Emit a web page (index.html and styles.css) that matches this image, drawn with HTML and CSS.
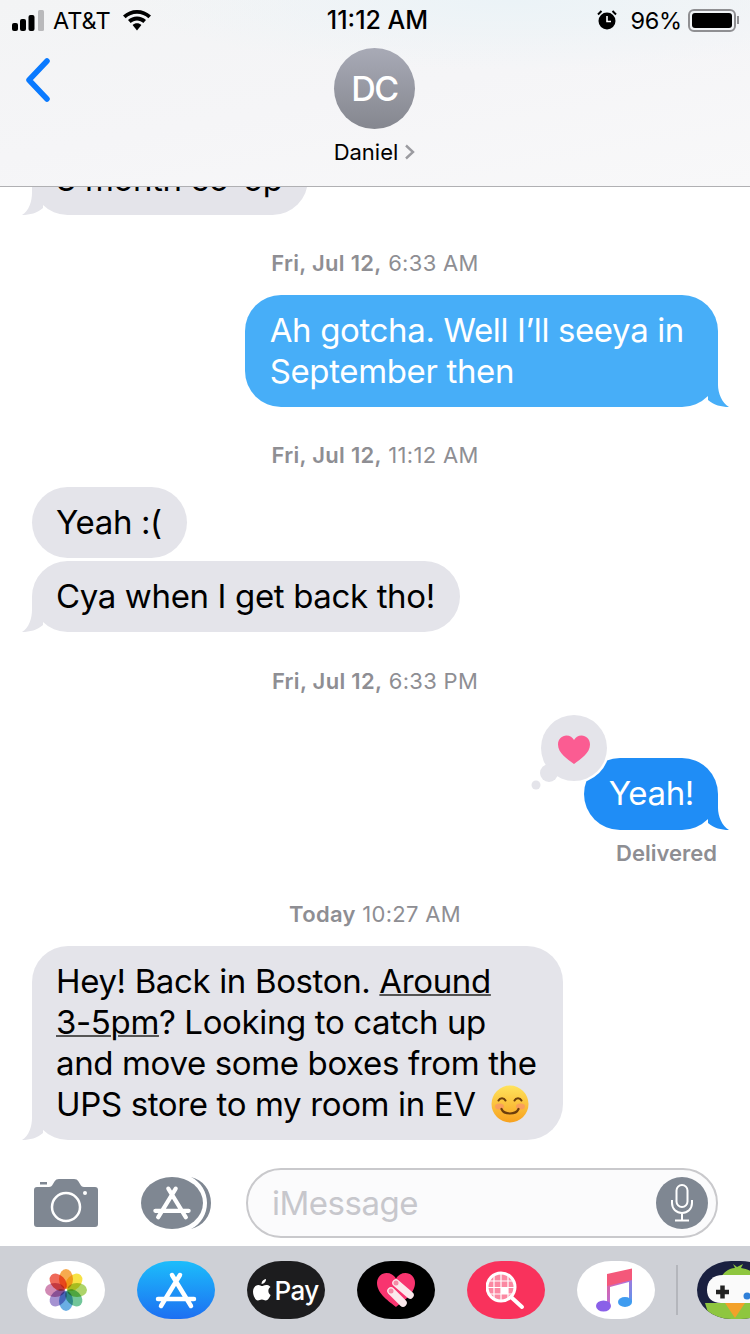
FILE: index.html
```html
<!DOCTYPE html>
<html lang="en">
<head>
    <meta charset="UTF-8">
    <meta name="viewport" content="width=device-width, initial-scale=1.0">
    <title>Messages</title>
    <link rel="stylesheet" href="styles.css">
</head>
<body>
    <div class="phone">
        <header class="header">
            <div class="status">
                <div class="status-left">
                    <svg class="signal" width="32" height="21" viewBox="0 0 32 21">
                        <rect x="0" y="13" width="6" height="8" rx="2" fill="#000"/>
                        <rect x="8" y="9" width="6" height="12" rx="2" fill="#000"/>
                        <rect x="16.500" y="5" width="6" height="16" rx="2" fill="#000"/>
                        <rect x="26" y="0" width="6" height="21" rx="1.500" fill="#b9b9bb"/>
                    </svg>
                    <span>AT&amp;T</span>
                    <svg class="wifi" width="28" height="21" viewBox="0 0 28 21">
                        <path d="M14 0C8.600 0 4 2 0 5.500L2.600 8.300C5.700 5.500 9.600 3.800 14 3.800S22.300 5.500 25.400 8.300L28 5.500C24 2 19.400 0 14 0Z" fill="#000"/>
                        <path d="M14 6.600C10.500 6.600 7.500 7.900 5 10.100L7.700 12.900C9.400 11.400 11.600 10.400 14 10.400S18.600 11.400 20.300 12.900L23 10.100C20.500 7.900 17.500 6.600 14 6.600Z" fill="#000"/>
                        <path d="M14 13.200C12.300 13.200 10.800 13.900 9.600 14.900L14 20.500L18.400 14.900C17.200 13.900 15.700 13.200 14 13.200Z" fill="#000"/>
                    </svg>
                </div>
                <div class="status-time">11:12 AM</div>
                <div class="status-right">
                    <svg class="alarm" width="20" height="20" viewBox="0 0 20 20">
                        <circle cx="10" cy="11" r="8.500" fill="#000"/>
                        <path d="M10 6V11.500H14" stroke="#fff" stroke-width="1.600" fill="none"/>
                        <path d="M1 4.500L4.500 1M19 4.500L15.500 1" stroke="#000" stroke-width="2"/>
                    </svg>
                    <span>96%</span>
                    <div class="battery"><div class="battery-fill"></div></div>
                    <div class="battery-nub"></div>
                </div>
            </div>
            <div class="nav">
                <svg class="back" width="26" height="44" viewBox="0 0 26 44">
                    <path d="M22 3L4 22L22 41" stroke="#0a7aff" stroke-width="5.500" stroke-linecap="round" stroke-linejoin="round" fill="none"/>
                </svg>
                <div class="contact">
                    <div class="avatar">DC</div>
                    <div class="contact-name">
                        Daniel
                        <svg width="11" height="16" viewBox="0 0 11 16">
                            <path d="M2 1.500L9 8L2 14.500" stroke="#9b9ba0" stroke-width="2.400" fill="none"/>
                        </svg>
                    </div>
                </div>
            </div>
        </header>

        <main class="thread">
            <div class="bubble in clipped">
                3 month co-op
                <svg class="tail"><use href="#tail-in"/></svg>
            </div>

            <div class="stamp"><b>Fri, Jul 12,</b> 6:33 AM</div>
            <div class="bubble out light">
                Ah gotcha. Well I’ll seeya in<br>September then
                <svg class="tail"><use href="#tail-out"/></svg>
            </div>

            <div class="stamp"><b>Fri, Jul 12,</b> 11:12 AM</div>
            <div class="bubble in">Yeah :(</div>
            <div class="bubble in next">
                Cya when I get back tho!
                <svg class="tail"><use href="#tail-in"/></svg>
            </div>

            <div class="stamp late"><b>Fri, Jul 12,</b> 6:33 PM</div>
            <div class="bubble out dark tapback-row">
                <div class="tapback">
                    <svg width="80" height="80" viewBox="0 0 80 80">
                        <circle cx="43" cy="33" r="35.500" fill="#fff"/>
                        <circle cx="43" cy="33" r="33" fill="#e4e4ea"/>
                        <circle cx="18" cy="58" r="9" fill="#e4e4ea"/>
                        <circle cx="5" cy="70" r="4.500" fill="#e4e4ea"/>
                        <path d="M43 49C36 44 27 38 27 29.500C27 24 31 20.500 35.500 20.500C39 20.500 41.500 22.500 43 25C44.500 22.500 47 20.500 50.500 20.500C55 20.500 59 24 59 29.500C59 38 50 44 43 49Z" fill="#fb5c92"/>
                    </svg>
                </div>
                Yeah!
                <svg class="tail"><use href="#tail-out"/></svg>
            </div>
            <div class="delivered">Delivered</div>

            <div class="stamp today"><b>Today</b> 10:27 AM</div>
            <div class="bubble in long">
                Hey! Back in Boston. <u>Around</u><br><u>3-5pm</u>? Looking to catch up<br>and move some boxes from the<br>UPS store to my room in EV
                <svg class="emoji" width="38" height="38" viewBox="0 0 38 38">
                    <defs>
                        <linearGradient id="emoji-face" x1="0" y1="0" x2="0" y2="1">
                            <stop offset="0" stop-color="#ffe35c"/>
                            <stop offset="1" stop-color="#f7a11e"/>
                        </linearGradient>
                    </defs>
                    <circle cx="19" cy="19" r="18.500" fill="url(#emoji-face)"/>
                    <ellipse cx="8.500" cy="21.500" rx="4.500" ry="3" fill="#f8926a" opacity=".7"/>
                    <ellipse cx="29.500" cy="21.500" rx="4.500" ry="3" fill="#f8926a" opacity=".7"/>
                    <path d="M7.500 15.500C9 12.500 13 12.500 14.500 15.500M23.500 15.500C25 12.500 29 12.500 30.500 15.500" stroke="#6b3d0c" stroke-width="2" stroke-linecap="round" fill="none"/>
                    <path d="M10.500 24C13 30 25 30 27.500 24" stroke="#6b3d0c" stroke-width="2.200" stroke-linecap="round" fill="none"/>
                </svg>
                <svg class="tail"><use href="#tail-in"/></svg>
            </div>
        </main>

        <div class="composer">
            <svg class="camera" width="64" height="48" viewBox="0 0 64 48">
                <path d="M3 8H15C17 8 18 7 19 5L20.500 2.500C21.500 .8 23 0 25 0H40C42 0 43.500 .8 44.500 2.500L46 5C47 7 48 8 50 8H61C63 8 64 9 64 11V45C64 47 63 48 61 48H3C1 48 0 47 0 45V11C0 9 1 8 3 8Z" fill="#7f8792"/>
                <rect x="6" y="3" width="7" height="2.500" fill="#7f8792"/>
                <circle cx="32" cy="28" r="14" fill="none" stroke="#fff" stroke-width="2.500"/>
                <circle cx="51" cy="14" r="2" fill="#fff"/>
            </svg>
            <div class="apps-btn">
                <svg width="70" height="52" viewBox="0 0 70 52">
                    <path d="M50 0C62 3 70 13 70 26S62 49 50 52C60 47 66 37 66 26S60 5 50 0Z" fill="#7f8792"/>
                    <ellipse cx="31" cy="26" rx="31" ry="26" fill="#7f8792"/>
                    <use href="#app-a" x="10.500" y="7" width="41" height="37"/>
                </svg>
            </div>
            <div class="input">
                <span class="placeholder">iMessage</span>
                <div class="mic">
                    <svg width="24" height="38" viewBox="0 0 24 38">
                        <rect x="6.500" y="1" width="11" height="22" rx="5.500" fill="none" stroke="#fff" stroke-width="2"/>
                        <path d="M2 16V19C2 25 6.500 29 12 29S22 25 22 19V16M12 29V36M5 36.500H19" fill="none" stroke="#fff" stroke-width="2"/>
                    </svg>
                </div>
            </div>
        </div>

        <nav class="tray">
            <div class="pill white">
                <svg class="flower" width="42" height="42" viewBox="-21 -21 42 42">
                    <ellipse class="petal" cy="-11" rx="7" ry="10" fill="#f6a13c"/>
                    <ellipse class="petal" cy="-11" rx="7" ry="10" fill="#f7df30" transform="rotate(45)"/>
                    <ellipse class="petal" cy="-11" rx="7" ry="10" fill="#a4d05a" transform="rotate(90)"/>
                    <ellipse class="petal" cy="-11" rx="7" ry="10" fill="#62c08e" transform="rotate(135)"/>
                    <ellipse class="petal" cy="-11" rx="7" ry="10" fill="#5aa5e0" transform="rotate(180)"/>
                    <ellipse class="petal" cy="-11" rx="7" ry="10" fill="#9b86cc" transform="rotate(225)"/>
                    <ellipse class="petal" cy="-11" rx="7" ry="10" fill="#cc7dac" transform="rotate(270)"/>
                    <ellipse class="petal" cy="-11" rx="7" ry="10" fill="#ee5a48" transform="rotate(315)"/>
                </svg>
            </div>
            <div class="pill store">
                <svg width="44" height="40" viewBox="0 0 44 40"><use href="#app-a" width="44" height="40"/></svg>
            </div>
            <div class="pill pay">
                <svg width="18" height="22" viewBox="0 0 18 22">
                    <path d="M13 0C13.200 2.600 11 5 8.600 4.900C8.300 2.500 10.600 .2 13 0ZM17.600 16C16.600 18.500 14.800 21.500 12.800 21.500C11.200 21.500 10.700 20.500 8.900 20.500S6.400 21.500 5 21.500C2.800 21.600 0 17 0 12.700C0 8.500 2.800 6 5.300 6C7 6 8.200 7.100 9.100 7.100S11.500 5.900 13.400 6C14.200 6 16.300 6.300 17.500 8.100C14.400 10 14.900 14.800 17.600 16Z" fill="#fff"/>
                </svg>
                <span>Pay</span>
            </div>
            <div class="pill black">
                <svg width="40" height="36" viewBox="0 0 40 36">
                    <path d="M20 35C14 30 1 22 1 11C1 5 5.500 1 10.500 1C14.500 1 18 3 20 6.500C22 3 25.500 1 29.500 1C34.500 1 39 5 39 11C39 22 26 30 20 35Z" fill="#f8346f"/>
                    <path d="M20 11L34 23M15 19L27 31" stroke="#fbe9ec" stroke-width="7.500" stroke-linecap="round"/>
                    <circle cx="20" cy="11" r="2.500" fill="#f58aa5"/>
                    <circle cx="15" cy="19" r="2.500" fill="#f58aa5"/>
                </svg>
            </div>
            <div class="pill red">
                <svg width="40" height="42" viewBox="0 0 40 42">
                    <circle cx="15" cy="18" r="14" fill="#fb88a2" stroke="#fff" stroke-width="3"/>
                    <path d="M4 12H26M2 18.500H28M3 25H27M8 6V30M15 5V31M22 6V30" stroke="#fff" stroke-width="1.200"/>
                    <rect x="15" y="18.500" width="7" height="6.500" fill="#fff"/>
                    <path d="M25 28L36 38" stroke="#fff" stroke-width="4" stroke-linecap="round"/>
                </svg>
            </div>
            <div class="pill white">
                <svg width="40" height="44" viewBox="0 0 40 44">
                    <defs>
                        <linearGradient id="note" x1="0" y1="0" x2="1" y2="1">
                            <stop offset="0" stop-color="#f4587a"/>
                            <stop offset=".5" stop-color="#ba6fd6"/>
                            <stop offset="1" stop-color="#4a9bf0"/>
                        </linearGradient>
                    </defs>
                    <path d="M11 8L36 1V34H33V14L14 19V39H11Z" fill="url(#note)"/>
                    <path d="M11 6L36 .5V12L11 18Z" fill="#f4587a"/>
                    <ellipse cx="7.500" cy="38" rx="7.500" ry="5.500" fill="#8a60e8"/>
                    <ellipse cx="29" cy="34" rx="7" ry="5" fill="#3f9cf0"/>
                </svg>
            </div>
            <div class="divider"></div>
            <div class="pill game">
                <svg width="78" height="58" viewBox="0 0 78 58">
                    <path d="M24 16C28 10 33 7 38 7L36 3L40 6L46 3L44 7C50 8 56 10 60 16Z" fill="#8ec63f"/>
                    <path d="M8 42H62V58H13Z" fill="#8ec63f"/>
                    <path d="M10 29C10 20 16 14 26 14H70C78 14 78 42 70 42H24C15 42 10 37 10 29Z" fill="#fafafa"/>
                    <path d="M19 31H32M25.500 24.500V37.500" stroke="#222" stroke-width="4.500"/>
                    <circle cx="50" cy="35" r="3.500" fill="#2f7fd8"/>
                    <path d="M28 42H48L38 57Z" fill="#f3a12a"/>
                </svg>
            </div>
        </nav>
    </div>

    <!-- shared shapes -->
    <svg class="defs" width="0" height="0">
        <symbol id="tail-in" viewBox="0 0 26 36">
            <path d="M10 0V14C10 22 7 32 0 36C8 36 15 34 21 29V0Z" fill="#e4e4ea"/>
        </symbol>
        <symbol id="tail-out" viewBox="0 0 26 36">
            <path d="M15 0V14C15 22 19 32 26 36C18 36 11 34 5 29V0Z" fill="currentColor"/>
        </symbol>
        <symbol id="app-a" viewBox="0 0 44 40">
            <path d="M18 5L37 36M26 5L7 36M4 29H40" stroke="#fff" stroke-width="4.500" stroke-linecap="round" fill="none"/>
        </symbol>
    </svg>
</body>
</html>
```

FILE: styles.css
```css
* {
    box-sizing: border-box;
}

body {
    margin: 0;
    background: #fff;
    font-family: Inter, "Liberation Sans", sans-serif;
}

.defs {
    position: absolute;
}

.phone {
    width: 750px;
    height: 1334px;
    display: flex;
    flex-direction: column;
    overflow: hidden;
}

/* header */
.header {
    height: 187px;
    flex: none;
    position: relative;
    z-index: 1;
    background:
        radial-gradient(ellipse 380px 70px at 68% 0, #ebf3f7, transparent),
        linear-gradient(170deg, #f3f4f5 0%, #f5f5f7 50%, #f8f8f9 100%);
    border-bottom: 1px solid #b0b0b3;
}

.status {
    display: grid;
    grid-template-columns: 1fr auto 1fr;
    align-items: center;
    height: 40px;
    padding: 0 11px 0 12px;
    font-size: 23.500px;
    color: #000;
}

.status-left,
.status-right {
    display: flex;
    align-items: center;
}

.status-left span {
    margin: 0 12px 0 9px;
}

.status-time {
    padding-left: 4px;
    font-size: 25px;
    font-weight: 500;
}

.status-right {
    justify-content: flex-end;
    letter-spacing: -0.2px;
}

.status-right span {
    margin: 0 6px 0 13px;
}

.battery {
    width: 48px;
    height: 23px;
    padding: 2px;
    border: 2px solid #8f8f92;
    border-radius: 6px;
}

.battery-fill {
    height: 100%;
    background: #000;
    border-radius: 3px;
}

.battery-nub {
    width: 2px;
    height: 8px;
    margin-left: 1px;
    background: #8f8f92;
}

.nav {
    position: relative;
    padding: 8px 1px 0 0;
    display: flex;
    justify-content: center;
}

.back {
    position: absolute;
    left: 25px;
    top: 18px;
}

.contact {
    display: flex;
    flex-direction: column;
    align-items: center;
}

.avatar {
    width: 81px;
    height: 81px;
    display: flex;
    align-items: center;
    justify-content: center;
    border-radius: 50%;
    background: linear-gradient(#a8aab6, #85878f);
    color: #fff;
    font-size: 34px;
    font-weight: 500;
    letter-spacing: -1.500px;
}

.contact-name {
    margin-top: 10px;
    display: flex;
    align-items: center;
    gap: 6px;
    font-size: 22px;
    line-height: 26px;
    color: #000;
}

/* messages */
.thread {
    flex: 1;
    min-height: 0;
    padding: 0 32px;
    display: flex;
    flex-direction: column;
}

.bubble {
    position: relative;
    align-self: flex-start;
    padding: 15px 25px 15px 24px;
    border-radius: 36px;
    font-size: 33px;
    line-height: 41px;
    letter-spacing: -0.36px;
    white-space: nowrap;
}

.bubble.in {
    background: #e4e4ea;
    color: #000;
}

.bubble.out {
    align-self: flex-end;
    color: #fff;
}

.bubble.light {
    padding: 15px 34px 15px 25px;
    background: #47aef8;
}

.bubble.dark {
    padding: 14.500px 24px 16.500px 25px;
    background: #1f8df6;
}

.bubble.long {
    padding-right: 26px;
}

.bubble u {
    text-decoration-color: #555;
    text-decoration-thickness: 1.500px;
}

.clipped {
    margin-top: -43px;
}

.next {
    margin-top: 3px;
}

.tail {
    position: absolute;
    bottom: 0;
    width: 26px;
    height: 36px;
}

.light .tail {
    color: #47aef8;
}

.dark .tail {
    color: #1f8df6;
}

.in .tail {
    left: -10px;
}

.out .tail {
    right: -11px;
}

.stamp {
    margin: 34px 0 18px;
    text-align: center;
    font-size: 22px;
    line-height: 28px;
    letter-spacing: 0.3px;
    color: #8e8e93;
}

.stamp b {
    font-weight: 600;
}

.stamp.late,
.stamp.today {
    margin-top: 35px;
}

.tapback-row {
    margin-top: 45px;
}

.tapback {
    position: absolute;
    left: -53px;
    top: -43px;
    height: 80px;
}

.delivered {
    margin: 11px 1px 0 0;
    text-align: right;
    font-size: 22px;
    font-weight: 600;
    line-height: 24px;
    color: #8e8e93;
}

.emoji {
    vertical-align: -7px;
    margin-left: 6px;
}

/* input row */
.composer {
    height: 86px;
    flex: none;
    padding: 8px 32px 8px 34px;
    display: flex;
    align-items: center;
}

.camera {
    flex: none;
}

.apps-btn {
    margin-left: 43px;
    height: 52px;
}

.input {
    flex: 1;
    height: 70px;
    margin-left: 35px;
    padding: 0 8px 0 24px;
    display: flex;
    align-items: center;
    justify-content: space-between;
    background: #fbfbfc;
    border: 2px solid #c9c9cc;
    border-radius: 35px;
}

.placeholder {
    font-size: 33px;
    letter-spacing: -0.5px;
    color: #c7c7cc;
}

.mic {
    width: 52px;
    height: 52px;
    display: flex;
    align-items: center;
    justify-content: center;
    border-radius: 50%;
    background: #7f8792;
}

/* app tray */
.tray {
    height: 88px;
    flex: none;
    padding: 15px 0 0 27px;
    display: flex;
    gap: 32px;
    background: #ced0d6;
}

.pill {
    width: 78px;
    height: 58px;
    flex: none;
    display: flex;
    align-items: center;
    justify-content: center;
    border-radius: 44% / 50%;
}

.pill.white {
    background: #fff;
}

.pill.store {
    background: linear-gradient(#1cbdfb, #1d6ff2);
}

.pill.pay {
    gap: 3px;
    background: #1c1c1e;
    color: #fff;
    font-size: 26px;
    font-weight: 500;
    letter-spacing: -0.6px;
}

.pill.black {
    background: #000;
}

.pill.red {
    background: #f9325c;
}

.pill.game {
    margin-left: -13px;
    overflow: hidden;
    background: #1a2040;
}

.petal {
    mix-blend-mode: multiply;
    opacity: .9;
}

.flower {
    isolation: isolate;
}

.divider {
    width: 2px;
    height: 50px;
    flex: none;
    margin: 4px 0 0 -11px;
    background: #b4b6bc;
}
```
